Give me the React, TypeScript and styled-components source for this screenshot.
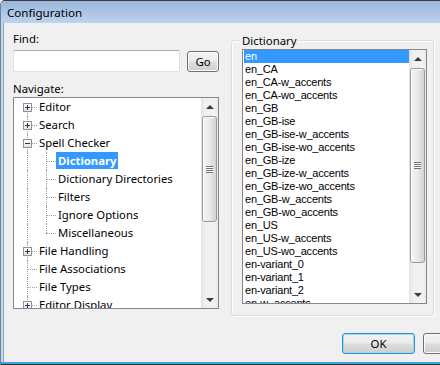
import React from 'react';
import styled, { createGlobalStyle } from 'styled-components';

const UI_FONT = `"Noto Sans", "Open Sans", sans-serif`;
const LIST_FONT = `"Liberation Sans", Arial, sans-serif`;

const GlobalStyle = createGlobalStyle`
  html, body {
    margin: 0;
    padding: 0;
    overflow: hidden;
    background: #f0f0f0;
  }
  body {
    font-family: ${UI_FONT};
  }
`;

const Window = styled.div`
  width: 510px;
  height: 365px;
  box-sizing: border-box;
  display: flex;
  flex-direction: column;
  border-top: 1px solid #3d3d3d;
  border-left: 1px solid #6f8298;
  border-top-left-radius: 5px;
  background: #c4d8ef;
  overflow: hidden;
`;

const TitleBar = styled.div`
  height: 22px;
  flex: none;
  display: flex;
  align-items: center;
  padding-left: 6px;
  background: linear-gradient(#99b5da, #bdd4ee);
  font: 11.6px ${UI_FONT};
  color: #000;
`;

const FrameBody = styled.div`
  flex: 1;
  display: flex;
  padding: 0 4px 0 2px;
  min-height: 0;
`;

const Client = styled.div`
  flex: 1;
  display: flex;
  flex-direction: column;
  padding: 8px 10px 0 9px;
  background: #f0f0f0;
  border-left: 1px solid #8ba2bd;
`;

const BottomFrame = styled.div`
  height: 3px;
  flex: none;
  box-sizing: border-box;
  border-top: 2px solid #3fa3db;
  background: #26323f;
`;

const MainRow = styled.div`
  display: flex;
  align-items: flex-start;
  gap: 12px;
`;

const LeftColumn = styled.div`
  width: 206px;
  display: flex;
  flex-direction: column;
`;

const FieldLabel = styled.div<{ $gap?: number }>`
  height: 15px;
  line-height: 15px;
  margin-top: ${p => p.$gap ?? 0}px;
  font: 11.4px/15px ${UI_FONT};
  color: #000;
`;

const FindRow = styled.div`
  margin-top: 4px;
  display: flex;
  align-items: flex-start;
  gap: 7px;
`;

const TextBox = styled.input`
  box-sizing: border-box;
  width: 167px;
  height: 22px;
  margin: 0;
  padding: 0 3px;
  border: 1px solid #dde1e7;
  border-top-color: #abadb3;
  border-radius: 2px;
  background: #fff;
  font: 11.4px ${UI_FONT};
  outline: none;
`;

const PushButton = styled.button<{ $width: number; $default?: boolean; $lift?: number }>`
  box-sizing: border-box;
  width: ${p => p.$width}px;
  height: 21px;
  margin: ${p => p.$lift ?? 0}px 0 0;
  padding: 0;
  flex: none;
  border: 1px solid ${p => (p.$default ? '#3c8bc6' : '#707070')};
  border-radius: 3px;
  background: linear-gradient(#f3f3f3 0%, #ebebeb 48%, #dddddd 52%, #cfcfcf 100%);
  box-shadow: inset 0 0 0 1px ${p => (p.$default ? '#8fe0f7' : '#fbfbfb')};
  font: 11.4px ${UI_FONT};
  color: #000;
`;

const ListFrame = styled.div<{ $width: number; $height: number; $gap?: number }>`
  box-sizing: border-box;
  width: ${p => p.$width}px;
  height: ${p => p.$height}px;
  margin-top: ${p => p.$gap ?? 0}px;
  border: 1px solid #828790;
  background: #fff;
  display: flex;
  overflow: hidden;
`;

/* tree */

const TreeItems = styled.div`
  flex: 1;
  overflow: hidden;
  padding-left: 4px;
`;

const TreeRow = styled.div`
  height: 18px;
  display: flex;
  align-items: flex-start;
`;

const Indent = styled.div<{ $up: boolean; $down: boolean; $branch: boolean }>`
  position: relative;
  width: 19px;
  height: 18px;
  flex: none;

  &::before {
    content: '';
    position: absolute;
    left: 9px;
    top: ${p => (p.$up ? 0 : 9)}px;
    bottom: ${p => (p.$down ? 0 : 9)}px;
    border-left: 1px dotted #a0a0a0;
  }

  &::after {
    content: '';
    display: ${p => (p.$branch ? 'block' : 'none')};
    position: absolute;
    left: 9px;
    right: 0;
    top: 9px;
    border-top: 1px dotted #a0a0a0;
  }
`;

const Expander = styled.span<{ $plus: boolean }>`
  position: absolute;
  left: 5px;
  top: 5px;
  z-index: 1;
  box-sizing: border-box;
  width: 9px;
  height: 9px;
  border: 1px solid #919191;
  background: linear-gradient(#ffffff, #e4e4e4);

  &::before {
    content: '';
    position: absolute;
    left: 1px;
    top: 3px;
    width: 5px;
    height: 1px;
    background: #1f3b63;
  }

  &::after {
    content: '';
    display: ${p => (p.$plus ? 'block' : 'none')};
    position: absolute;
    left: 3px;
    top: 1px;
    width: 1px;
    height: 5px;
    background: #1f3b63;
  }
`;

const NodeLabel = styled.span<{ $selected?: boolean }>`
  height: 17px;
  padding: 0 2px;
  white-space: nowrap;
  font: ${p => (p.$selected ? 'bold' : 'normal')} 11.3px/17px ${UI_FONT};
  color: ${p => (p.$selected ? '#fff' : '#000')};
  background: ${p => (p.$selected ? '#3399ff' : 'transparent')};
`;

/* scrollbar */

const ScrollTrackBar = styled.div`
  width: 17px;
  flex: none;
  display: flex;
  flex-direction: column;
  background: linear-gradient(90deg, #e3e3e3, #f1f1f1 25%, #f1f1f1 80%, #e9e9e9);
`;

const ArrowButton = styled.div<{ $down?: boolean }>`
  height: 17px;
  flex: none;
  display: flex;
  align-items: center;
  justify-content: center;

  &::before {
    content: '';
    width: 0;
    height: 0;
    border-left: 4px solid transparent;
    border-right: 4px solid transparent;
    ${p => (p.$down ? 'border-top: 4px solid #3c3c3c;' : 'border-bottom: 4px solid #3c3c3c;')}
  }
`;

const Track = styled.div`
  flex: 1;
`;

const Thumb = styled.div<{ $offset: number; $size: number }>`
  box-sizing: border-box;
  margin: ${p => p.$offset}px 1px 0;
  height: ${p => p.$size}px;
  border: 1px solid #999;
  border-radius: 3px;
  background: linear-gradient(90deg, #f5f5f5, #e9e9e9 50%, #d3d3d3);
  box-shadow: inset 1px 1px 0 #fff;
  display: flex;
  align-items: center;
  justify-content: center;
`;

const Grip = styled.div`
  width: 7px;
  height: 7px;
  background: repeating-linear-gradient(#707070 0 1px, #fdfdfd 1px 2px);
`;

const ScrollBar: React.FC<{ offset: number; size: number }> = ({ offset, size }) => (
  <ScrollTrackBar>
    <ArrowButton />
    <Track>
      <Thumb $offset={offset} $size={size}>
        <Grip />
      </Thumb>
    </Track>
    <ArrowButton $down />
  </ScrollTrackBar>
);

/* dictionary group */

const GroupBox = styled.div`
  position: relative;
  box-sizing: border-box;
  width: 203px;
  height: 276px;
  margin-top: 9px;
  padding: 8px 0 0 10px;
  border: 1px solid #d5dfe5;
  border-radius: 3px;
  box-shadow: inset 1px 1px 0 #fff, 1px 1px 0 #fff;
`;

const GroupTitle = styled.span`
  position: absolute;
  left: 8px;
  top: -8px;
  padding: 0 2px;
  background: #f0f0f0;
  font: 11.4px/15px ${UI_FONT};
  color: #000;
`;

const ListItems = styled.div`
  flex: 1;
  overflow: hidden;
`;

const ListItem = styled.div<{ $selected?: boolean }>`
  height: 13px;
  margin-left: 1px;
  padding-left: 1px;
  white-space: nowrap;
  font: 11px/13px ${LIST_FONT};
  letter-spacing: -0.2px;
  color: ${p => (p.$selected ? '#fff' : '#000')};
  background: ${p => (p.$selected ? '#3399ff' : 'transparent')};
`;

const ButtonRow = styled.div`
  margin-top: 17px;
  display: flex;
  justify-content: flex-end;
  gap: 8px;
`;

type TreeNode = {
  label: string;
  level: 0 | 1;
  expander?: '+' | '-';
  selected?: boolean;
  last?: boolean;
};

const treeRows: TreeNode[] = [
  { label: 'Editor', level: 0, expander: '+' },
  { label: 'Search', level: 0, expander: '+' },
  { label: 'Spell Checker', level: 0, expander: '-' },
  { label: 'Dictionary', level: 1, selected: true },
  { label: 'Dictionary Directories', level: 1 },
  { label: 'Filters', level: 1 },
  { label: 'Ignore Options', level: 1 },
  { label: 'Miscellaneous', level: 1, last: true },
  { label: 'File Handling', level: 0, expander: '+' },
  { label: 'File Associations', level: 0 },
  { label: 'File Types', level: 0 },
  { label: 'Editor Display', level: 0, expander: '+' },
];

const dictionaries = [
  'en',
  'en_CA',
  'en_CA-w_accents',
  'en_CA-wo_accents',
  'en_GB',
  'en_GB-ise',
  'en_GB-ise-w_accents',
  'en_GB-ise-wo_accents',
  'en_GB-ize',
  'en_GB-ize-w_accents',
  'en_GB-ize-wo_accents',
  'en_GB-w_accents',
  'en_GB-wo_accents',
  'en_US',
  'en_US-w_accents',
  'en_US-wo_accents',
  'en-variant_0',
  'en-variant_1',
  'en-variant_2',
  'en-w_accents',
];

const App: React.FC = () => {
  return (
    <>
      <GlobalStyle />
      <Window>
        <TitleBar>Configuration</TitleBar>
        <FrameBody>
          <Client>
            <MainRow>
              <LeftColumn>
                <FieldLabel>Find:</FieldLabel>
                <FindRow>
                  <TextBox />
                  <PushButton $width={32} $lift={1}>Go</PushButton>
                </FindRow>
                <FieldLabel $gap={9}>Navigate:</FieldLabel>
                <ListFrame $width={206} $height={212} $gap={1}>
                  <TreeItems>
                    {treeRows.map((row, i) => {
                      const isRoot = row.level === 0;
                      return (
                        <TreeRow key={row.label}>
                          <Indent $up={i > 0} $down $branch={isRoot}>
                            {row.expander && <Expander $plus={row.expander === '+'} />}
                          </Indent>
                          {!isRoot && <Indent $up $down={!row.last} $branch />}
                          <NodeLabel $selected={row.selected}>{row.label}</NodeLabel>
                        </TreeRow>
                      );
                    })}
                  </TreeItems>
                  <ScrollBar offset={1} size={106} />
                </ListFrame>
              </LeftColumn>
              <GroupBox>
                <GroupTitle>Dictionary</GroupTitle>
                <ListFrame $width={185} $height={255}>
                  <ListItems>
                    {dictionaries.map((name, i) => (
                      <ListItem key={name} $selected={i === 0}>
                        {name}
                      </ListItem>
                    ))}
                  </ListItems>
                  <ScrollBar offset={1} size={195} />
                </ListFrame>
              </GroupBox>
            </MainRow>
            <ButtonRow>
              <PushButton $width={73} $default>OK</PushButton>
              <PushButton $width={73}>Cancel</PushButton>
            </ButtonRow>
          </Client>
        </FrameBody>
        <BottomFrame />
      </Window>
    </>
  );
};

export default App;
